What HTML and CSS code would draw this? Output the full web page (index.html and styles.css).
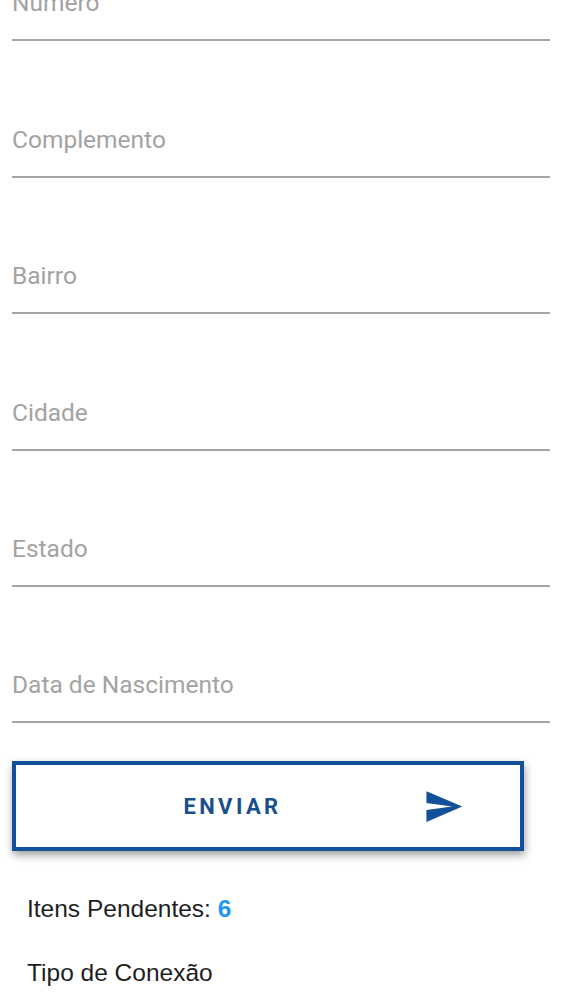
FILE: index.html
```html
<!DOCTYPE html>
<html lang="pt-BR">
<head>
<meta charset="utf-8">
<title>Cadastro</title>
<link rel="stylesheet" href="styles.css">
</head>
<body>
<main class="page">
  <form class="form">
    <div class="field field-first"><label class="field-label">Numero</label></div>
    <div class="field"><label class="field-label">Complemento</label></div>
    <div class="field"><label class="field-label">Bairro</label></div>
    <div class="field"><label class="field-label">Cidade</label></div>
    <div class="field"><label class="field-label">Estado</label></div>
    <div class="field"><label class="field-label">Data de Nascimento</label></div>
    <button type="button" class="send-btn">
      <span class="send-text">ENVIAR</span>
      <svg class="send-icon" viewBox="0 0 24 24" aria-hidden="true"><path d="M2.01 21L23 12 2.01 3 2 10l15 2-15 2z"/></svg>
    </button>
  </form>
  <section class="status">
    <p class="status-line">Itens Pendentes: <span class="status-count">6</span></p>
    <p class="status-line">Tipo de Conexão</p>
  </section>
</main>
</body>
</html>
```

FILE: styles.css
```css
html, body {
  margin: 0;
  padding: 0;
  background: #ffffff;
  overflow: hidden;
}

.page {
  width: 563px;
  height: 1000px;
}

.form {
  display: flex;
  flex-direction: column;
  padding-left: 12px;
  width: 538px;
}

.field {
  box-sizing: border-box;
  height: 136.4px;
  display: flex;
  flex-direction: column;
  justify-content: flex-end;
  border-bottom: 2px solid #a6a6a6;
}

.field-first {
  margin-top: -95px;
}

.field-label {
  font-family: Roboto, "Noto Sans", sans-serif;
  font-size: 24.5px;
  line-height: 29px;
  color: #a3a3a3;
  margin-bottom: 22px;
}

.send-btn {
  box-sizing: border-box;
  margin-top: 38px;
  width: 512px;
  height: 90px;
  display: flex;
  align-items: center;
  padding: 0;
  background: #ffffff;
  border: 4px solid #12509a;
  box-shadow: 1px 4px 8px rgba(0, 0, 0, 0.38);
  cursor: pointer;
}

.send-text {
  flex: 1;
  padding-left: 26px;
  text-align: center;
  font-family: Roboto, "Noto Sans", sans-serif;
  font-weight: 700;
  font-size: 22px;
  letter-spacing: 3.4px;
  color: #1a4f8e;
}

.send-icon {
  width: 41px;
  height: 41px;
  margin-right: 56px;
  fill: #12509a;
  flex: none;
}

.status {
  padding-left: 27px;
  margin-top: 43px;
}

.status-line {
  margin: 0 0 34px 0;
  font-family: "Liberation Sans", Arial, sans-serif;
  font-size: 24.5px;
  line-height: 30px;
  color: #1e1e1e;
}

.status-count {
  color: #2196f3;
  font-weight: 700;
}
```
